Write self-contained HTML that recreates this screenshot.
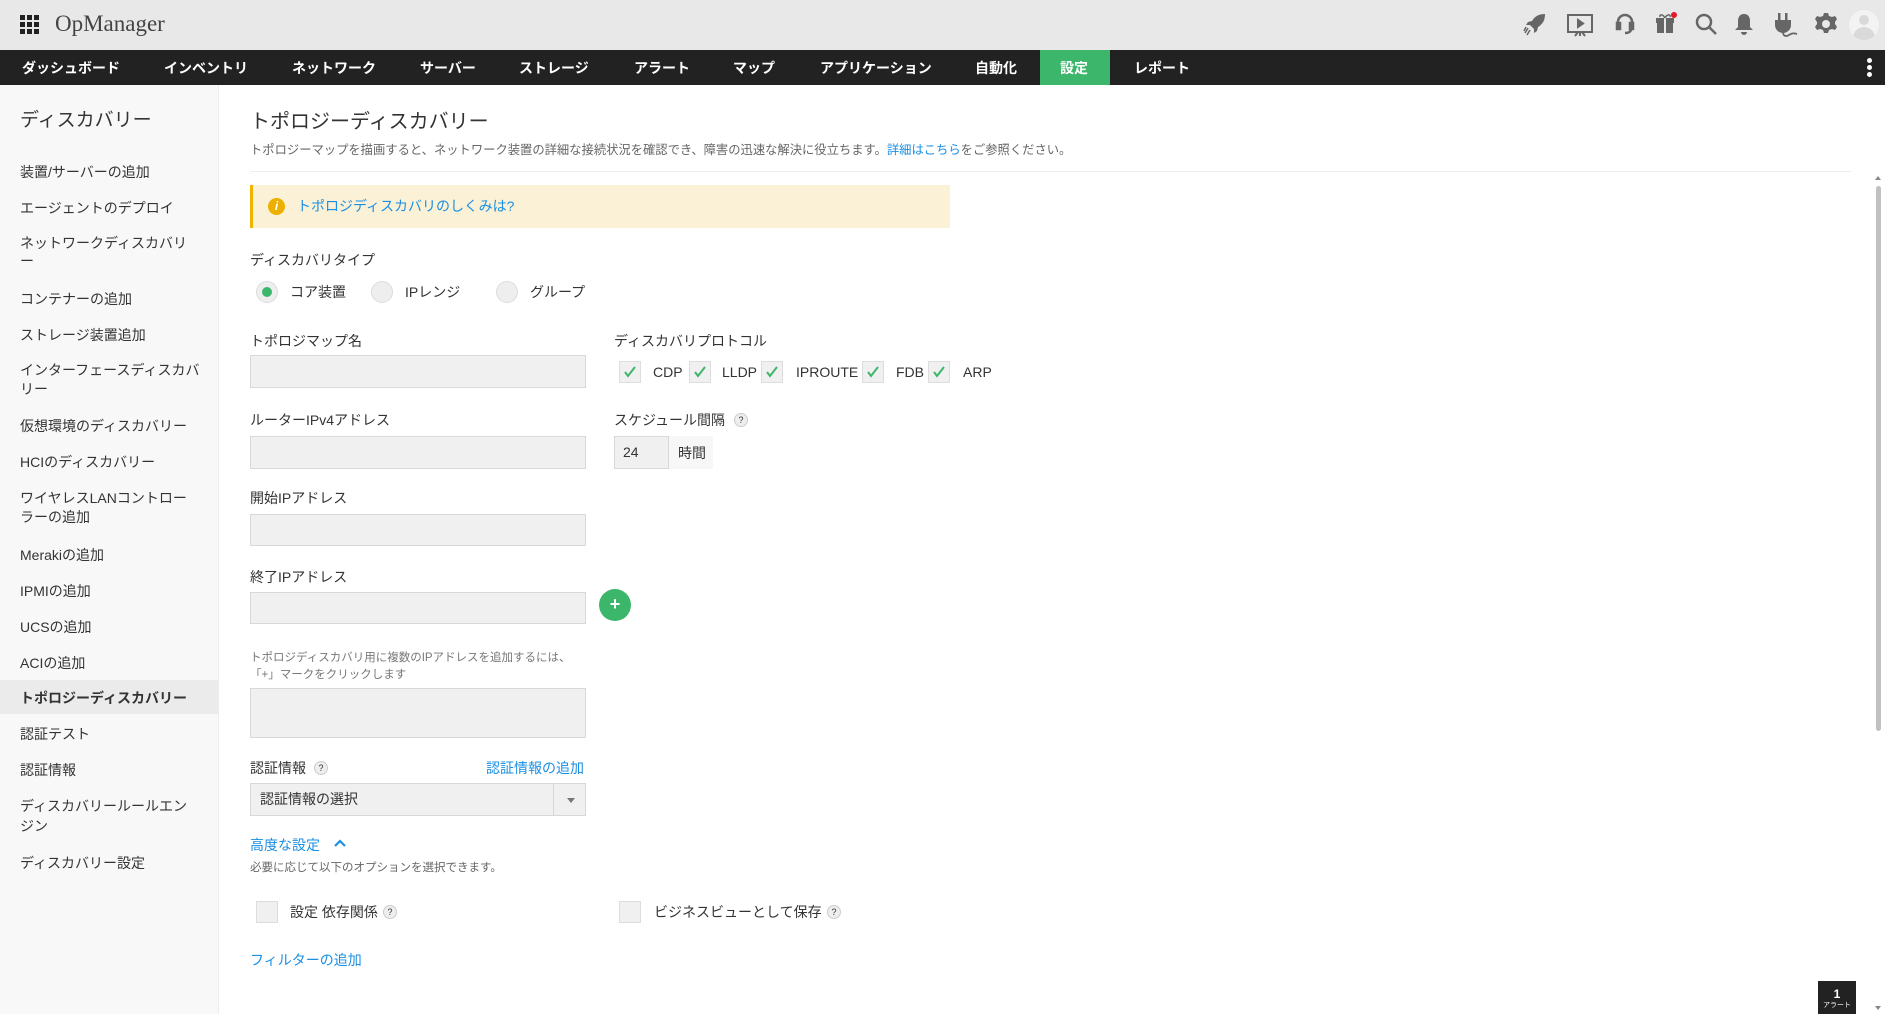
<!DOCTYPE html>
<html><head><meta charset="utf-8">
<style>
*{margin:0;padding:0;box-sizing:border-box}
body{width:1885px;height:1014px;overflow:hidden;background:#fff;font-family:"Liberation Sans","Noto Sans CJK JP",sans-serif;color:#333;position:relative}
.a{position:absolute;white-space:nowrap;line-height:20px}
#top{position:absolute;left:0;top:0;width:1885px;height:50px;background:#e8e8e9}
#nav{position:absolute;left:0;top:50px;width:1885px;height:35px;background:#222}
.n{position:absolute;top:1px;height:35px;line-height:35px;color:#fff;font-size:14px;font-weight:bold}
#side{position:absolute;left:0;top:85px;width:219px;height:929px;background:#f8f8f8;border-right:1px solid #eee}
.s{position:absolute;left:20px;font-size:14px;line-height:20px;color:#333}
.lbl{font-size:14px}
.inp{position:absolute;background:#f0f0f0;border:1px solid #d8d8d8}
.cb{position:absolute;width:22px;height:22px;background:#f0f0f0;border:1px solid #ddd}
.cb svg{position:absolute;left:3px;top:3px}
.rd{position:absolute;width:22px;height:22px;border-radius:50%;background:#eee;border:1px solid #ddd}
.q{position:absolute;width:14px;height:14px;border-radius:50%;background:#eee;border:1px solid #ccc;font-size:9px;line-height:12px;text-align:center;color:#333}
.lnk{color:#1a8fe3}
.ic{position:absolute;top:12px}
#m{position:absolute;left:0;top:2px;width:1885px;height:1012px}
</style></head><body>
<div id="top">
  <svg style="position:absolute;left:20px;top:15px" width="19" height="19" viewBox="0 0 19 19" fill="#222">
    <rect x="0" y="0" width="5" height="5"/><rect x="7" y="0" width="5" height="5"/><rect x="14" y="0" width="5" height="5"/>
    <rect x="0" y="7" width="5" height="5"/><rect x="7" y="7" width="5" height="5"/><rect x="14" y="7" width="5" height="5"/>
    <rect x="0" y="14" width="5" height="5"/><rect x="7" y="14" width="5" height="5"/><rect x="14" y="14" width="5" height="5"/>
  </svg>
  <div class="a" style="left:55px;top:10px;font-family:'Liberation Serif',serif;font-size:23px;line-height:28px;color:#444">OpManager</div>
  <svg class="ic" style="left:1523px" width="24" height="24" viewBox="0 0 24 24" fill="#666"><path d="M22 2c-6 0-10 2-13 7l-4 1-2 3 4 0 4 4 0 4 3-2 1-4c5-3 7-7 7-13z"/><path d="M5 16l-3 5M7 18l-3 5M3 15l-2 4" stroke="#666" stroke-width="1.5"/></svg>
  <svg class="ic" style="left:1566px" width="28" height="26" viewBox="0 0 28 26" fill="none" stroke="#666" stroke-width="2"><rect x="2" y="3" width="24" height="17"/><path d="M12 8l5 3.5-5 3.5z" fill="#666"/><path d="M14 20v4M9 24l3-4M19 24l-3-4"/></svg>
  <svg class="ic" style="left:1614px" width="22" height="24" viewBox="0 0 22 24" fill="none" stroke="#666" stroke-width="2.5"><path d="M4 13V10a7 7 0 0114 0v3"/><rect x="3" y="11" width="3" height="6" fill="#666"/><rect x="16" y="11" width="3" height="6" fill="#666"/><path d="M17 17c0 3-3 4-6 4"/></svg>
  <svg class="ic" style="left:1654px;top:9px" width="24" height="26" viewBox="0 0 24 26" fill="#666"><rect x="2" y="9" width="18" height="5"/><rect x="3" y="14" width="16" height="10"/><rect x="10" y="9" width="2" height="15" fill="#e8e8e9"/><path d="M11 9c-2-4-6-4-5-1M11 9c2-4 6-4 5-1" stroke="#666" fill="none" stroke-width="1.5"/><circle cx="20" cy="6" r="3" fill="#e8182a"/></svg>
  <svg class="ic" style="left:1694px" width="24" height="24" viewBox="0 0 24 24" fill="none" stroke="#666" stroke-width="2.5"><circle cx="10" cy="10" r="7"/><path d="M15 15l7 7"/></svg>
  <svg class="ic" style="left:1734px" width="20" height="24" viewBox="0 0 20 24" fill="#666"><path d="M10 2c-4 0-6 3-6 7v6l-3 3h18l-3-3V9c0-4-2-7-6-7zM7 20a3 3 0 006 0z"/></svg>
  <svg class="ic" style="left:1772px" width="26" height="26" viewBox="0 0 26 26" fill="#666"><rect x="6" y="1" width="2.5" height="7"/><rect x="13" y="1" width="2.5" height="7"/><path d="M3 8h16v5a8 8 0 01-16 0z"/><path d="M11 20c0 4 3 5 6 3s5-2 8-1" stroke="#666" fill="none" stroke-width="1.8"/></svg>
  <svg class="ic" style="left:1814px" width="24" height="24" viewBox="0 0 24 24" fill="#666"><path d="M10 1h4l1 3 3 1 3-1 2 3-2 3v2l2 3-2 3-3-1-3 1-1 3h-4l-1-3-3-1-3 1-2-3 2-3v-2L1 7l2-3 3 1 3-1z"/><circle cx="12" cy="12" r="4" fill="#e8e8e9"/></svg>
  <div style="position:absolute;left:1849px;top:10px;width:30px;height:30px;border-radius:50%;background:#f3f3f3;overflow:hidden">
    <div style="position:absolute;left:10px;top:5px;width:10px;height:10px;border-radius:50%;background:#d9d9d9"></div>
    <div style="position:absolute;left:4px;top:17px;width:22px;height:16px;border-radius:11px 11px 0 0;background:#d9d9d9"></div>
  </div>
</div>
<div id="nav">
  <div class="n" style="left:22px">ダッシュボード</div>
  <div class="n" style="left:164px">インベントリ</div>
  <div class="n" style="left:292px">ネットワーク</div>
  <div class="n" style="left:420px">サーバー</div>
  <div class="n" style="left:519px">ストレージ</div>
  <div class="n" style="left:634px">アラート</div>
  <div class="n" style="left:733px">マップ</div>
  <div class="n" style="left:820px">アプリケーション</div>
  <div class="n" style="left:975px">自動化</div>
  <div style="position:absolute;left:1040px;top:0;width:70px;height:35px;background:#3cb66a"></div>
  <div class="n" style="left:1060px">設定</div>
  <div class="n" style="left:1134px">レポート</div>
  <div style="position:absolute;left:1867px;top:8px;width:5px;height:5px;border-radius:50%;background:#fff"></div>
  <div style="position:absolute;left:1867px;top:15px;width:5px;height:5px;border-radius:50%;background:#fff"></div>
  <div style="position:absolute;left:1867px;top:22px;width:5px;height:5px;border-radius:50%;background:#fff"></div>
</div>
<div id="side"></div>
<div style="position:absolute;left:0;top:680px;width:219px;height:34px;background:#ebebeb"></div>
<div id="m">
<div class="s" style="top:107px;font-size:19px;line-height:24px">ディスカバリー</div>
<div class="s" style="top:160px">装置/サーバーの追加</div>
<div class="s" style="top:196px">エージェントのデプロイ</div>
<div class="s" style="top:232px;line-height:18px">ネットワークディスカバリ<br>ー</div>
<div class="s" style="top:287px">コンテナーの追加</div>
<div class="s" style="top:323px">ストレージ装置追加</div>
<div class="s" style="top:359px;line-height:19px">インターフェースディスカバ<br>リー</div>
<div class="s" style="top:414px">仮想環境のディスカバリー</div>
<div class="s" style="top:450px">HCIのディスカバリー</div>
<div class="s" style="top:487px;line-height:19px">ワイヤレスLANコントロー<br>ラーの追加</div>
<div class="s" style="top:543px">Merakiの追加</div>
<div class="s" style="top:579px">IPMIの追加</div>
<div class="s" style="top:615px">UCSの追加</div>
<div class="s" style="top:651px">ACIの追加</div>
<div class="s" style="top:686px;font-weight:bold">トポロジーディスカバリー</div>
<div class="s" style="top:722px">認証テスト</div>
<div class="s" style="top:758px">認証情報</div>
<div class="s" style="top:794px;line-height:20px">ディスカバリールールエン<br>ジン</div>
<div class="s" style="top:851px">ディスカバリー設定</div>

<div class="a" style="left:250px;top:107px;font-size:20px;line-height:26px">トポロジーディスカバリー</div>
<div class="a" style="left:250px;top:140px;font-size:12.3px;line-height:16px;color:#666">トポロジーマップを描画すると、ネットワーク装置の詳細な接続状況を確認でき、障害の迅速な解決に役立ちます。<span class="lnk">詳細はこちら</span>をご参照ください。</div>
<div style="position:absolute;left:250px;top:169px;width:1601px;height:1px;background:#eee"></div>
<div style="position:absolute;left:250px;top:183px;width:700px;height:43px;background:#faf1d7;border-left:3px solid #f0b400"></div>
<div style="position:absolute;left:268px;top:196px;width:17px;height:17px;border-radius:50%;background:#eeb000;color:#fff;font-size:12px;font-weight:bold;text-align:center;line-height:17px;font-style:italic">i</div>
<div class="a lnk" style="left:297px;top:194px;font-size:14px">トポロジディスカバリのしくみは?</div>

<div class="a lbl" style="left:250px;top:248px">ディスカバリタイプ</div>
<div class="rd" style="left:256px;top:279px"><div style="position:absolute;left:5px;top:5px;width:10px;height:10px;border-radius:50%;background:#3cb66a"></div></div>
<div class="a lbl" style="left:290px;top:280px">コア装置</div>
<div class="rd" style="left:371px;top:279px"></div>
<div class="a lbl" style="left:405px;top:280px">IPレンジ</div>
<div class="rd" style="left:496px;top:279px"></div>
<div class="a lbl" style="left:530px;top:280px">グループ</div>

<div class="a lbl" style="left:250px;top:329px">トポロジマップ名</div>
<div class="inp" style="left:250px;top:353px;width:336px;height:33px"></div>
<div class="a lbl" style="left:614px;top:329px">ディスカバリプロトコル</div>
<div class="cb" style="left:619px;top:359px"><svg width="14" height="14" viewBox="0 0 14 14" fill="none" stroke="#3cb66a" stroke-width="2"><path d="M2 7l3 4 7-9"/></svg></div>
<div class="a lbl" style="left:653px;top:360px">CDP</div>
<div class="cb" style="left:689px;top:359px"><svg width="14" height="14" viewBox="0 0 14 14" fill="none" stroke="#3cb66a" stroke-width="2"><path d="M2 7l3 4 7-9"/></svg></div>
<div class="a lbl" style="left:722px;top:360px">LLDP</div>
<div class="cb" style="left:761px;top:359px"><svg width="14" height="14" viewBox="0 0 14 14" fill="none" stroke="#3cb66a" stroke-width="2"><path d="M2 7l3 4 7-9"/></svg></div>
<div class="a lbl" style="left:796px;top:360px">IPROUTE</div>
<div class="cb" style="left:862px;top:359px"><svg width="14" height="14" viewBox="0 0 14 14" fill="none" stroke="#3cb66a" stroke-width="2"><path d="M2 7l3 4 7-9"/></svg></div>
<div class="a lbl" style="left:896px;top:360px">FDB</div>
<div class="cb" style="left:928px;top:359px"><svg width="14" height="14" viewBox="0 0 14 14" fill="none" stroke="#3cb66a" stroke-width="2"><path d="M2 7l3 4 7-9"/></svg></div>
<div class="a lbl" style="left:963px;top:360px">ARP</div>

<div class="a lbl" style="left:250px;top:408px">ルーターIPv4アドレス</div>
<div class="inp" style="left:250px;top:434px;width:336px;height:33px"></div>
<div class="a lbl" style="left:614px;top:408px">スケジュール間隔</div>
<div class="q" style="left:734px;top:411px">?</div>
<div style="position:absolute;left:614px;top:434px;width:99px;height:33px;background:#f7f7f7"></div>
<div class="inp" style="left:614px;top:434px;width:55px;height:33px"></div>
<div class="a lbl" style="left:623px;top:440px">24</div>
<div class="a lbl" style="left:678px;top:441px">時間</div>

<div class="a lbl" style="left:250px;top:486px">開始IPアドレス</div>
<div class="inp" style="left:250px;top:512px;width:336px;height:32px"></div>
<div class="a lbl" style="left:250px;top:565px">終了IPアドレス</div>
<div class="inp" style="left:250px;top:590px;width:336px;height:32px"></div>
<div style="position:absolute;left:599px;top:587px;width:32px;height:32px;border-radius:50%;background:#3cb66a;color:#fff;font-size:18px;font-weight:bold;text-align:center;line-height:31px">+</div>

<div class="a" style="left:250px;top:648px;font-size:11.5px;line-height:17px;color:#777">トポロジディスカバリ用に複数のIPアドレスを追加するには、<br>「+」マークをクリックします</div>
<div class="inp" style="left:250px;top:686px;width:336px;height:50px"></div>

<div class="a lbl" style="left:250px;top:756px">認証情報</div>
<div class="q" style="left:314px;top:759px">?</div>
<div class="a lnk" style="left:486px;top:756px;font-size:14px">認証情報の追加</div>
<div class="inp" style="left:250px;top:781px;width:336px;height:33px"></div>
<div style="position:absolute;left:553px;top:782px;width:1px;height:31px;background:#d8d8d8"></div>
<div class="a lbl" style="left:260px;top:787px">認証情報の選択</div>
<div style="position:absolute;left:567px;top:796px;width:0;height:0;border-left:4px solid transparent;border-right:4px solid transparent;border-top:5px solid #777"></div>

<div class="a lnk" style="left:250px;top:833px;font-size:14px">高度な設定</div>
<svg style="position:absolute;left:334px;top:837px" width="12" height="9" viewBox="0 0 12 9" fill="none" stroke="#1a8fe3" stroke-width="2.2"><path d="M1 7l5-5 5 5"/></svg>
<div class="a" style="left:250px;top:856px;font-size:11.5px;color:#666">必要に応じて以下のオプションを選択できます。</div>

<div class="cb" style="left:256px;top:899px"></div>
<div class="a lbl" style="left:290px;top:900px">設定 依存関係</div>
<div class="q" style="left:383px;top:903px">?</div>
<div class="cb" style="left:619px;top:899px"></div>
<div class="a lbl" style="left:654px;top:900px">ビジネスビューとして保存</div>
<div class="q" style="left:827px;top:903px">?</div>

<div class="a lnk" style="left:250px;top:948px;font-size:14px">フィルターの追加</div>
</div>

<div style="position:absolute;left:1876px;top:186px;width:5px;height:545px;background:#c1c1c1;border-radius:3px"></div>
<div style="position:absolute;left:1875px;top:176px;width:0;height:0;border-left:3px solid transparent;border-right:3px solid transparent;border-bottom:4px solid #888"></div>
<div style="position:absolute;left:1875px;top:1006px;width:0;height:0;border-left:3px solid transparent;border-right:3px solid transparent;border-top:4px solid #888"></div>
<div style="position:absolute;left:1818px;top:981px;width:38px;height:33px;background:#222;color:#fff;text-align:center">
  <div style="font-size:12px;font-weight:bold;line-height:14px;margin-top:6px">1</div>
  <div style="font-size:7px;line-height:9px">アラート</div>
</div>
</body></html>
